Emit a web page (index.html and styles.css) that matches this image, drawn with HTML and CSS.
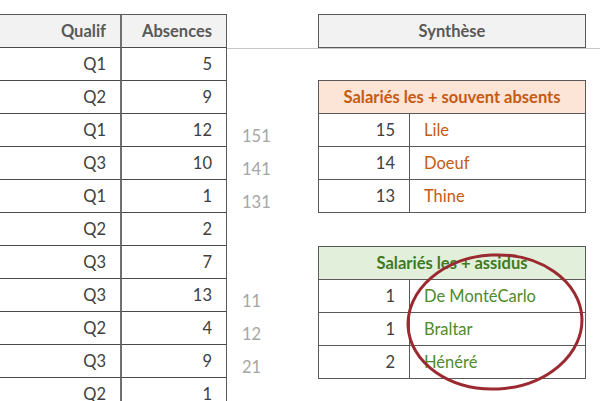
FILE: index.html
```html
<!DOCTYPE html>
<html lang="fr">

<head>
    <meta charset="UTF-8">
    <meta name="viewport" content="width=device-width, initial-scale=1.0">
    <title>Absences - Synthèse</title>
    <link rel="stylesheet" href="styles.css">
</head>

<body>
    <div class="sheet">
        <!-- Source data -->
        <div class="data">
            <div class="cell head">Qualif</div>
            <div class="cell head">Absences</div>
            <div class="cell">Q1</div><div class="cell">5</div>
            <div class="cell">Q2</div><div class="cell">9</div>
            <div class="cell">Q1</div><div class="cell">12</div>
            <div class="cell">Q3</div><div class="cell">10</div>
            <div class="cell">Q1</div><div class="cell">1</div>
            <div class="cell">Q2</div><div class="cell">2</div>
            <div class="cell">Q3</div><div class="cell">7</div>
            <div class="cell">Q3</div><div class="cell">13</div>
            <div class="cell">Q2</div><div class="cell">4</div>
            <div class="cell">Q3</div><div class="cell">9</div>
            <div class="cell">Q2</div><div class="cell">1</div>
        </div>

        <div class="side">
            <div class="strip">
                <div class="title">Synthèse</div>
            </div>

            <div class="side-body">
                <div class="helpers">
                    <div class="helper"></div>
                    <div class="helper"></div>
                    <div class="helper">151</div>
                    <div class="helper">141</div>
                    <div class="helper">131</div>
                    <div class="helper"></div>
                    <div class="helper"></div>
                    <div class="helper">11</div>
                    <div class="helper">12</div>
                    <div class="helper">21</div>
                </div>

                <div class="summaries">
                    <div class="summary absent">
                        <div class="summary-head">Salariés les + souvent absents</div>
                        <div class="num">15</div><div class="name">Lile</div>
                        <div class="num">14</div><div class="name">Doeuf</div>
                        <div class="num">13</div><div class="name">Thine</div>
                    </div>

                    <div class="summary present">
                        <div class="summary-head">Salariés les + assidus</div>
                        <div class="num">1</div><div class="name">De MontéCarlo</div>
                        <div class="num">1</div><div class="name">Braltar</div>
                        <div class="num">2</div><div class="name">Hénéré</div>
                        <!-- hand-drawn circle over the names -->
                        <svg class="circle" width="184" height="142" viewBox="0 0 184 142">
                            <ellipse cx="92" cy="71" rx="87" ry="67" fill="none" stroke="#9b2a30" stroke-width="3" transform="rotate(-3 92 71)"/>
                        </svg>
                    </div>
                </div>
            </div>
        </div>
    </div>
</body>

</html>
```

FILE: styles.css
```css
body {
    margin: 0;
    background: #fff;
    font-family: Lato, "Open Sans", sans-serif;
    font-size: 16.5px;
    color: #404040;
}

.sheet {
    display: flex;
    align-items: flex-start;
    width: 600px;
    height: 401px;
    overflow: hidden;
    padding-top: 14px;
    box-sizing: border-box;
}

/* left data table */
.data {
    display: grid;
    grid-template-columns: 122px 105px;
    border-top: 1px solid #595959;
    flex: none;
}

.cell {
    height: 33px;
    box-sizing: border-box;
    border-bottom: 1px solid #4a4a4a;
    padding-right: 14px;
    display: flex;
    align-items: center;
    justify-content: flex-end;
}

.cell:nth-child(odd) {
    border-right: 2px solid #707070;
}

.cell:nth-child(even) {
    border-right: 1px solid #595959;
}

.cell.head {
    background: #f2f2f2;
    font-weight: bold;
    color: #595959;
}

/* right part */
.side {
    flex: 1;
    display: flex;
    flex-direction: column;
}

.strip {
    height: 34px;
    border-bottom: 1px solid #c6c6c6;
    padding-left: 91px;
}

.title {
    width: 268px;
    height: 34px;
    box-sizing: border-box;
    border: 1px solid #595959;
    background: #f2f2f2;
    color: #595959;
    font-weight: bold;
    display: flex;
    align-items: center;
    justify-content: center;
}

.side-body {
    display: flex;
}

.helpers {
    width: 91px;
    padding-top: 4px;
    flex: none;
}

.helper {
    height: 33px;
    padding-left: 15px;
    display: flex;
    align-items: center;
    color: #a6a6a6;
}

.summaries {
    display: flex;
    flex-direction: column;
    gap: 33px;
    padding-top: 31px;
}

.summary {
    position: relative;
    width: 268px;
    display: grid;
    grid-template-columns: 91px 1fr;
    border: 1px solid #595959;
    border-bottom: none;
    box-sizing: border-box;
}

.summary-head {
    grid-column: 1 / -1;
    height: 33px;
    box-sizing: border-box;
    border-bottom: 1px solid #595959;
    font-weight: bold;
    display: flex;
    align-items: center;
    justify-content: center;
}

.num,
.name {
    height: 33px;
    box-sizing: border-box;
    border-bottom: 1px solid #595959;
    display: flex;
    align-items: center;
}

.num {
    justify-content: flex-end;
    padding-right: 14px;
    border-right: 1px solid #595959;
}

.name {
    padding-left: 14px;
}

.absent .summary-head {
    background: #fce4d6;
    color: #c55a11;
}

.absent .name {
    color: #c55a11;
}

.present .summary-head {
    background: #e2efda;
    color: #3f7a22;
}

.present .name {
    color: #4f8a2b;
}

.circle {
    position: absolute;
    left: 84px;
    top: 4px;
}
```
